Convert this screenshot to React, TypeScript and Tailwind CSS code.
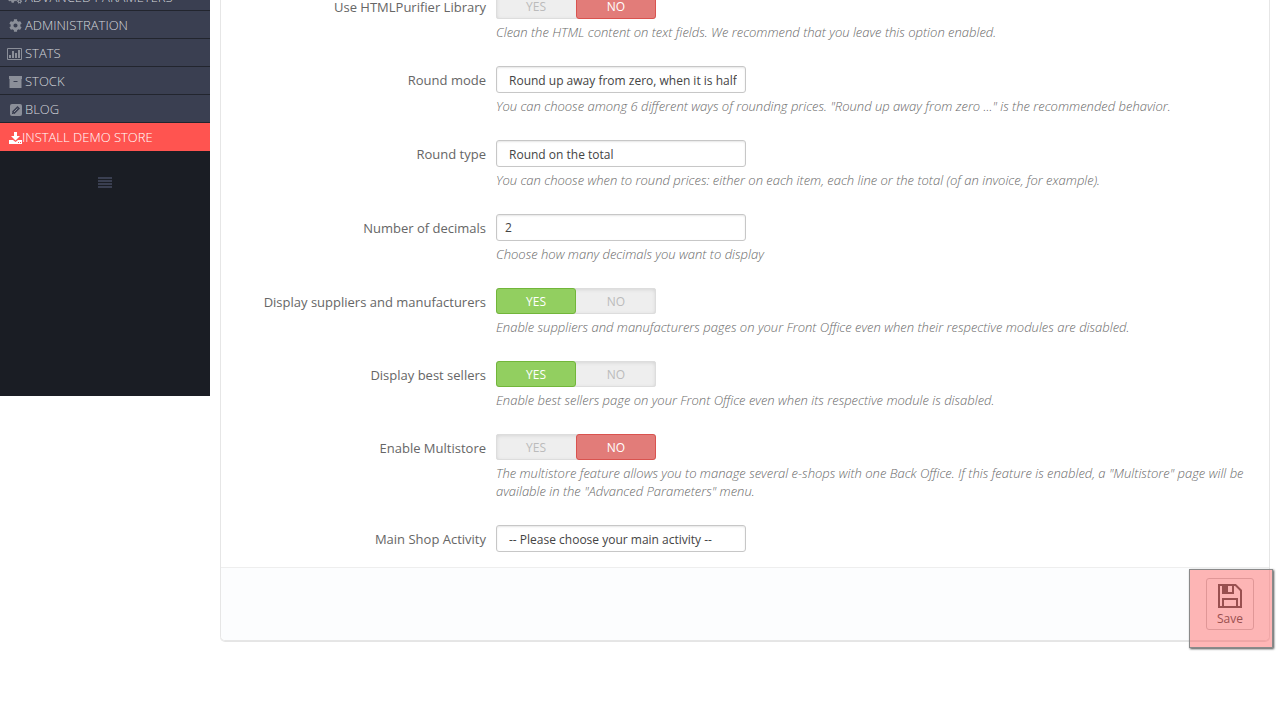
import { useState } from "react";
import type { ReactNode } from "react";
import clsx from "clsx";
import { FaCog, FaCogs } from "react-icons/fa";

function StatsIcon() {
  return (
    <svg viewBox="0 0 15 12" className="h-3 w-[15px] shrink-0" fill="currentColor">
      <path fillRule="evenodd" d="M1 0h13a1 1 0 0 1 1 1v10a1 1 0 0 1-1 1H1a1 1 0 0 1-1-1V1a1 1 0 0 1 1-1zM1 1v10h13V1z" />
      <path d="M2 7h2v3H2zM5 3h2v7H5zM8 5h2v5H8zM11 2h2v8h-2z" />
    </svg>
  );
}

function StockIcon() {
  return (
    <svg viewBox="0 0 13 12" className="h-3 w-[13px] shrink-0" fill="currentColor">
      <path fillRule="evenodd" d="M0 0h13v3h-.5v9H.5V3H0zM4.500 5v1h4V5z" />
    </svg>
  );
}

function BlogIcon() {
  return (
    <svg viewBox="0 0 12 12" className="h-3 w-3 shrink-0" fill="currentColor">
      <rect width="12" height="12" rx="2" />
      <path d="M2 10V7.500L7.500 2 10 4.500 4.500 10z" fill="#3a3f51" />
      <path d="M4 8l3.500-3.500" stroke="currentColor" strokeWidth="1" />
      <path d="M2.500 8.500l1 1" stroke="currentColor" strokeWidth=".6" />
    </svg>
  );
}

function InstallIcon() {
  return (
    <svg viewBox="0 0 13 12" className="h-3 w-[13px] shrink-0" fill="currentColor">
      <path d="M5 0h3v4h3L6.500 8.500 2 4h3z" />
      <path fillRule="evenodd" d="M0 8h4l2.500 2L9 8h4v4H0zM9 10v1h1v-1zM11 10v1h1v-1z" />
    </svg>
  );
}

function CollapseIcon() {
  return (
    <svg viewBox="0 0 14 11" className="h-[11px] w-3.5" fill="currentColor">
      <path d="M0 0h14v2H0zM0 3h14v2H0zM0 6h14v2H0zM0 9h14v2H0z" />
    </svg>
  );
}

function SaveIcon() {
  return (
    <svg viewBox="0 0 24 24" className="h-6 w-6" fill="none" stroke="currentColor" strokeWidth="2">
      <path d="M1 1h16.500L23 6.500V23H1z" />
      <path d="M5 1v8h10V1M5 23v-8h14v8" />
      <path d="M5 1h5v8H5z" fill="currentColor" stroke="none" />
    </svg>
  );
}

const menu = [
  { label: "Advanced Parameters", icon: <FaCogs size={14} className="shrink-0" /> },
  { label: "Administration", icon: <FaCog size={13} className="shrink-0" /> },
  { label: "Stats", icon: <StatsIcon /> },
  { label: "Stock", icon: <StockIcon /> },
  { label: "Blog", icon: <BlogIcon /> },
];

function Sidebar() {
  return (
    <nav className="h-[414px] w-[210px] shrink-0 self-start bg-[#1a1d24] pt-px text-[13px] font-light uppercase">
      <ul>
        {menu.map((item) => (
          <li key={item.label} className="border-b border-[#22252e] bg-[#3a3f51]">
            <a href="#" className="flex h-[27px] items-center gap-[3px] pt-[2px] pl-[7px] text-[#d5d7dc]">
              <span className="flex w-[15px] justify-end text-[#8b8f99]">{item.icon}</span>
              {item.label}
            </a>
          </li>
        ))}
        <li className="bg-[#ff5450]">
          <a href="#" className="flex h-7 items-center pt-px pl-[9px] text-white">
            <InstallIcon />
            Install demo store
          </a>
        </li>
      </ul>
      <button type="button" aria-label="Collapse menu" className="mx-auto mt-[26px] block text-[#3a3f51]">
        <CollapseIcon />
      </button>
    </nav>
  );
}

interface FieldProps {
  id: string;
  label: string;
  help?: string;
  children: ReactNode;
}

function Field({ id, label, help, children }: FieldProps) {
  return (
    <div className="flex gap-[10px]">
      <label htmlFor={id} className="w-64 shrink-0 pt-[5px] text-right text-[13px] leading-[18px] text-[#666]">
        {label}
      </label>
      <div className="min-w-0 flex-1">
        {children}
        {help && <p className="mt-1 pb-px text-[13px] leading-[18px] font-light text-[#6a6a6a] italic">{help}</p>}
      </div>
    </div>
  );
}

interface SwitchProps {
  id: string;
  initial: boolean;
}

function Switch({ id, initial }: SwitchProps) {
  const [on, setOn] = useState(initial);
  const option = "flex flex-1 cursor-pointer items-center justify-center rounded-[3px] border pt-px";

  return (
    <div
      role="radiogroup"
      className="relative flex h-[26px] w-40 rounded-[3px] bg-[#eee] text-[12px] text-[#bbb] shadow-[inset_0_0_0_1px_#ddd,inset_0_1px_4px_rgba(0,0,0,0.15)]"
    >
      <label className={clsx(option, on ? "border-[#72b63a] bg-[#92cf60] text-white" : "border-transparent")}>
        <input id={id} type="radio" name={id} className="sr-only" checked={on} onChange={() => setOn(true)} />
        YES
      </label>
      <label className={clsx(option, on ? "border-transparent" : "border-[#d9534f] bg-[#e27c79] text-white")}>
        <input type="radio" name={id} className="sr-only" checked={!on} onChange={() => setOn(false)} />
        NO
      </label>
    </div>
  );
}

const control =
  "block h-[27px] w-[250px] appearance-none rounded-[3px] border border-[#c7c7c7] bg-white text-[12px] text-[#444] shadow-[inset_0_1px_2px_rgba(0,0,0,0.1)]";

function Select({ id, option }: { id: string; option: string }) {
  return (
    <select id={id} className={clsx(control, "pt-[2px] pr-2 pl-3")}>
      <option>{option}</option>
    </select>
  );
}

export default function App() {
  return (
    <div className="min-h-screen overflow-hidden bg-white font-['Open_Sans',sans-serif]">
      {/* page is scrolled part way down */}
      <div className="-mt-[18px] flex items-start gap-[10px]">
        <Sidebar />
        <main className="mr-[10px] min-w-0 flex-1 rounded-b-[5px] border border-t-0 border-[#e6e6e6] shadow-[0_1px_0_rgba(0,0,0,0.1)]">
          <form>
            <div className="flex flex-col gap-6 pt-[11px] pr-5 pb-[15px] pl-[9px]">
              <Field
                id="purifier"
                label="Use HTMLPurifier Library"
                help="Clean the HTML content on text fields. We recommend that you leave this option enabled."
              >
                <Switch id="purifier" initial={false} />
              </Field>
              <Field
                id="round-mode"
                label="Round mode"
                help={'You can choose among 6 different ways of rounding prices. "Round up away from zero ..." is the recommended behavior.'}
              >
                <Select id="round-mode" option="Round up away from zero, when it is half way there (recommended)" />
              </Field>
              <Field
                id="round-type"
                label="Round type"
                help="You can choose when to round prices: either on each item, each line or the total (of an invoice, for example)."
              >
                <Select id="round-type" option="Round on the total" />
              </Field>
              <Field id="decimals" label="Number of decimals" help="Choose how many decimals you want to display">
                <input id="decimals" type="text" defaultValue="2" className={clsx(control, "px-2")} />
              </Field>
              <Field
                id="suppliers"
                label="Display suppliers and manufacturers"
                help="Enable suppliers and manufacturers pages on your Front Office even when their respective modules are disabled."
              >
                <Switch id="suppliers" initial />
              </Field>
              <Field
                id="best-sellers"
                label="Display best sellers"
                help="Enable best sellers page on your Front Office even when its respective module is disabled."
              >
                <Switch id="best-sellers" initial />
              </Field>
              <Field
                id="multistore"
                label="Enable Multistore"
                help={'The multistore feature allows you to manage several e-shops with one Back Office. If this feature is enabled, a "Multistore" page will be available in the "Advanced Parameters" menu.'}
              >
                <Switch id="multistore" initial={false} />
              </Field>
              <Field id="activity" label="Main Shop Activity">
                <Select id="activity" option="-- Please choose your main activity --" />
              </Field>
            </div>
            <div className="flex h-[73px] justify-end rounded-b-[5px] border-t border-[#eee] bg-[#fcfdfe] pt-[10px] pr-[15px]">
              <div className="relative h-[52px] w-12">
                <button
                  type="submit"
                  className="flex h-full w-full flex-col items-center rounded-[3px] border border-[#ccc] pt-[5px] text-[12px] leading-[18px] text-[#555]"
                >
                  <SaveIcon />
                  <span className="mt-[2px]">Save</span>
                </button>
                {/* highlight over the save button */}
                <div className="pointer-events-none absolute -top-[9px] -right-[19px] -bottom-[18px] -left-[17px] border border-[#8a8a8a] bg-[#ff4949]/40 shadow-[1px_1px_2px_rgba(0,0,0,0.7)]" />
              </div>
            </div>
          </form>
        </main>
      </div>
    </div>
  );
}
